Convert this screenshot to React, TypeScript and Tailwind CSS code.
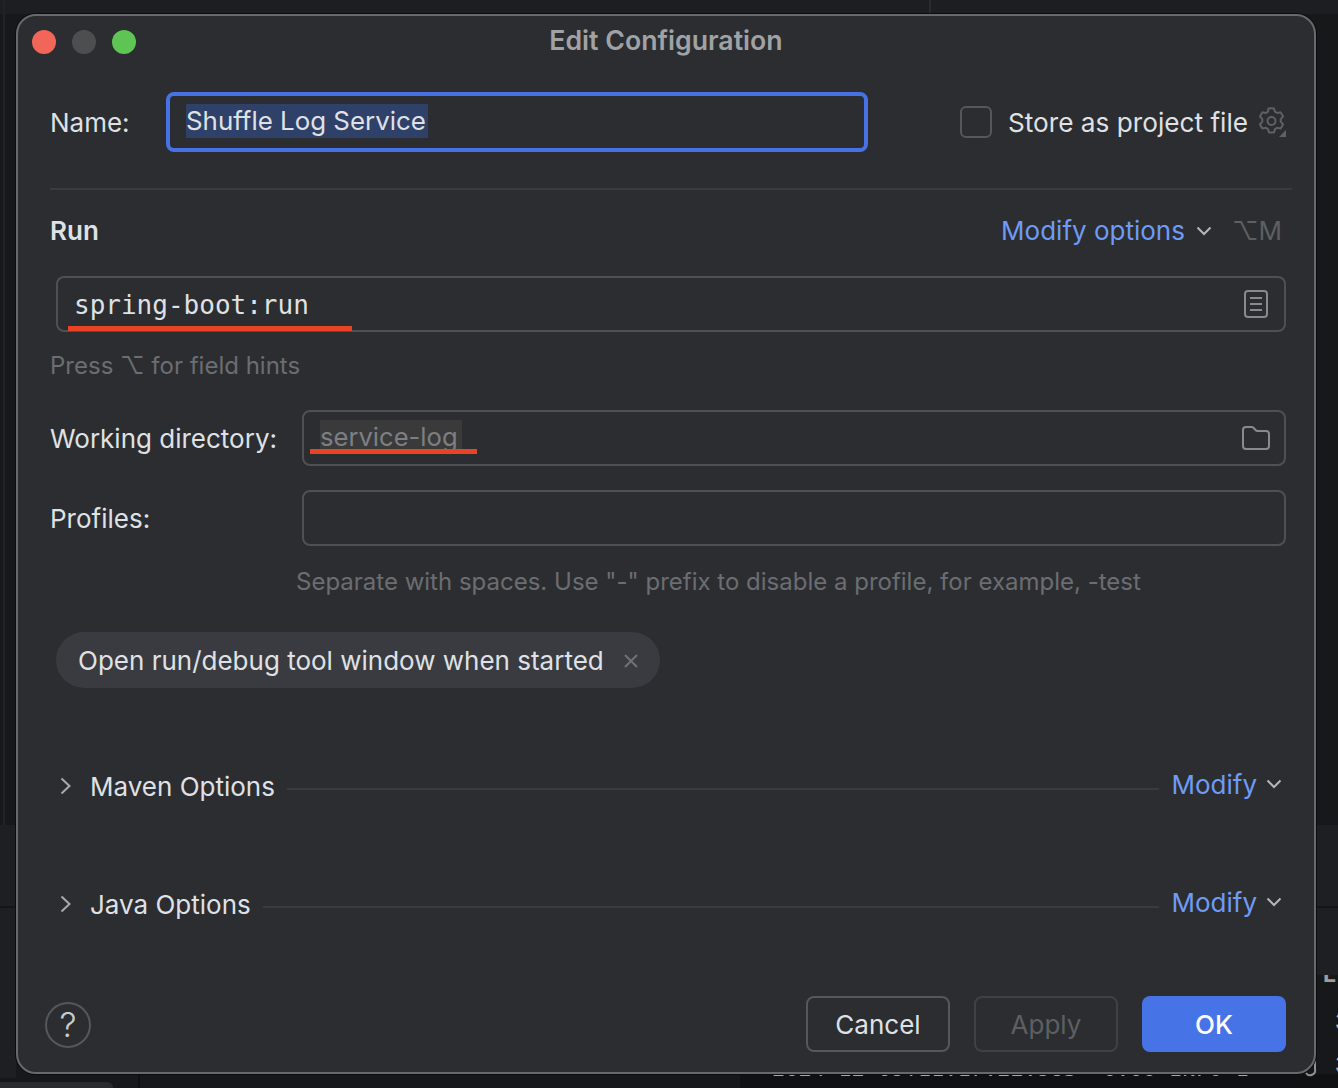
import React from "react";

const Chevron = ({ className }: { className?: string }) => (
  <svg width="16" height="10" viewBox="0 0 16 10" fill="none" className={className}>
    <path d="M1.5 1.5 L8 8 L14.5 1.5" stroke="#b4b6ba" strokeWidth="2" />
  </svg>
);

const ChevronRight = () => (
  <svg width="12" height="18" viewBox="0 0 12 18" fill="none">
    <path d="M1.5 1.5 L9.500 9 L1.500 16.500" stroke="#a8aaae" strokeWidth="2" />
  </svg>
);

const Gear = () => (
  <svg width="29" height="30" viewBox="0 0 29 30" fill="none">
    <path
      d="M13 1.5h0.5a11 11 0 0 1 5 0l1 3.2 2.2 1.3 3.3-.7a12 12 0 0 1 2.500 4.300l-2.300 2.500v2.600l2.300 2.500a12 12 0 0 1-2.500 4.300l-3.300-.7-2.200 1.300-1 3.200a11 11 0 0 1-5 0l-1-3.200-2.200-1.300-3.300.7a12 12 0 0 1-2.500-4.300l2.300-2.500v-2.600l-2.300-2.500a12 12 0 0 1 2.500-4.300l3.300.7 2.200-1.300z"
      stroke="#5f6165"
      strokeWidth="2"
      transform="translate(-1.500 0)"
    />
    <circle cx="14.500" cy="14" r="4" stroke="#5f6165" strokeWidth="2" />
    <path d="M29 23v7h-7z" fill="#5f6165" />
  </svg>
);

const DocIcon = () => (
  <svg width="24" height="28" viewBox="0 0 24 28" fill="none">
    <rect x="1" y="1" width="22" height="26" rx="3" stroke="#868a91" strokeWidth="2" />
    <path d="M6 8h12M6 14h12M6 20h12" stroke="#868a91" strokeWidth="2" />
  </svg>
);

const FolderIcon = () => (
  <svg width="28" height="24" viewBox="0 0 28 24" fill="none">
    <path
      d="M1 4a3 3 0 0 1 3-3h5.500a3 3 0 0 1 2 .8l2 2.200a3 3 0 0 0 2 1h8.500a3 3 0 0 1 3 3v12a3 3 0 0 1-3 3H4a3 3 0 0 1-3-3z"
      stroke="#868a91"
      strokeWidth="2"
    />
  </svg>
);

const CloseIcon = () => (
  <svg width="14" height="14" viewBox="0 0 14 14" fill="none">
    <path d="M1 1l12 12M13 1L1 13" stroke="#6f7175" strokeWidth="2" />
  </svg>
);

const Section = ({ title }: { title: string }) => (
  <div className="flex h-[36px] items-center pl-[10px] pr-[4px]">
    <span className="flex w-[30px] shrink-0 items-center">
      <ChevronRight />
    </span>
    <span className="mt-[2px] text-[#dfe1e5]">{title}</span>
    <span className="ml-[12px] mr-[12px] mt-[6px] h-[2px] flex-1 bg-[#393b3f]" />
    <span className="mb-[2px] text-[#6f9bf5]">Modify</span>
    <span className="mb-[4px] ml-[9px] flex">
      <Chevron />
    </span>
  </div>
);

export default function App() {
  return (
    <div
      className="relative h-[1088px] w-[1338px] overflow-hidden bg-[#17181a] pl-[16px] pt-[14px] text-[26px] leading-[34px]"
      style={{ fontFamily: "Inter, 'Liberation Sans', sans-serif" }}
    >
      {/* backdrop: the IDE behind the dialog */}
      <div className="absolute left-0 top-0 h-[14px] w-full bg-[#1d1e21]" />
      <div className="absolute left-[929px] top-0 h-[14px] w-[2px] bg-[#2a2b2e]" />
      <div className="absolute left-[3px] top-0 h-[825px] w-[2px] bg-[#222326]" />
      <div className="absolute left-[1322px] top-[964px] font-mono text-[24px] font-semibold leading-[24px] text-[#9b9da1]">
        Lt
      </div>
      <div className="absolute left-[1335px] top-[1002px] font-mono text-[26px] font-semibold leading-[43px] text-[#b4b6ba]">
        3
        <br />3
      </div>
      <div className="absolute bottom-0 left-[1316px] top-[825px] h-[150px] w-[22px] bg-[#1e1f22]" />
      <div className="absolute left-[1316px] top-[906px] h-[2px] w-[22px] bg-[#141517]" />
      <div className="absolute left-0 top-[825px] h-[253px] w-[16px] bg-[#1e1f22]" />
      <div className="absolute left-0 top-[906px] h-[2px] w-[16px] bg-[#141517]" />
      <div className="absolute bottom-0 left-[740px] h-[14px] w-[598px] bg-[#101113]" />
      <div className="absolute bottom-0 left-0 h-[6px] w-[113px] rounded-tr-[8px] bg-[#2a2b2e]" />
      <div className="absolute bottom-0 left-[138px] h-[14px] w-[2px] bg-[#0e0f10]" />
      <div
        className="absolute left-[772px] top-[1056px] text-[22px] leading-[26px] text-[#a8aaae]"
        style={{ fontFamily: "'DejaVu Sans Mono', monospace" }}
      >
        2024-12-09T11:17:22.983 +0:00 INFO 1
      </div>
      <svg className="absolute left-[1300px] top-[1056px]" width="20" height="24" viewBox="0 0 20 24" fill="none">
        <path d="M15 2v11a5 5 0 0 1-9 4" stroke="#8e9094" strokeWidth="2" />
      </svg>

      {/* dialog */}
      <div className="relative flex h-[1060px] w-[1300px] flex-col rounded-[20px] border-2 border-[#67696c] bg-[#2b2d30] pl-[32px] pr-[28px] shadow-[0_0_0_1px_#0c0c0e]">
        {/* title bar */}
        <div className="relative -ml-[18px] flex h-[52px] items-center">
          <div className="flex gap-[16px]">
            <span className="h-[24px] w-[24px] rounded-full bg-[#f2665a]" />
            <span className="h-[24px] w-[24px] rounded-full bg-[#4d4e50]" />
            <span className="h-[24px] w-[24px] rounded-full bg-[#5ec453]" />
          </div>
          <div className="absolute left-[14px] right-0 top-[7px] text-center text-[26.7px] font-semibold text-[#a0a2a6]">
            Edit Configuration
          </div>
        </div>

        {/* name row */}
        <div className="mt-[24px] flex h-[60px] items-center">
          <span className="w-[116px] shrink-0 pt-[2px] text-[#dfe1e5]">Name:</span>
          <div className="flex h-[60px] w-[702px] shrink-0 items-center rounded-[8px] border-[4px] border-[#4672e6] pl-[16px]">
            <span className="-mt-[2px] bg-[#2f4069] pr-[2px] text-[25.9px] text-[#dfe1e5]">Shuffle Log Service</span>
          </div>
          <div className="ml-[92px] h-[32px] w-[32px] shrink-0 rounded-[6px] border-2 border-[#55575b]" />
          <span className="ml-[16px] whitespace-nowrap pt-[2px] text-[26.2px] text-[#dfe1e5]">Store as project file</span>
          <span className="ml-[9px] flex shrink-0">
            <Gear />
          </span>
        </div>

        <div className="mr-[-6px] mt-[36px] h-[2px] bg-[#3a3b3f]" />

        {/* run header */}
        <div className="mt-[23px] flex h-[36px] items-center">
          <span className="font-semibold text-[#dfe1e5]">Run</span>
          <span className="ml-auto text-[#6f9bf5]">Modify options</span>
          <span className="ml-[11px] flex">
            <Chevron />
          </span>
          <span className="ml-[20px] mr-[4px] text-[#5d5f63]">⌥M</span>
        </div>

        {/* command */}
        <div className="relative ml-[6px] mt-[27px] flex h-[56px] items-center justify-between rounded-[8px] border-2 border-[#4e5054] pl-[16px] pr-[16px]">
          <span
            className="pt-[1px] font-medium text-[#dfe1e5]"
            style={{ fontFamily: "'DejaVu Sans Mono', monospace" }}
          >
            spring-boot:run
          </span>
          <DocIcon />
          <span className="absolute bottom-[-1px] left-[10px] h-[5px] w-[284px] bg-[#e84325]" />
        </div>

        <div className="mt-[17px] h-[34px] text-[24px] text-[#6b6d72]">Press ⌥ for field hints</div>

        {/* working dir */}
        <div className="mt-[27px] flex h-[56px] items-center">
          <span className="w-[252px] shrink-0 pt-[2px] text-[#dfe1e5]">Working directory:</span>
          <div className="relative flex h-[56px] flex-1 items-center justify-between rounded-[8px] border-2 border-[#4e5054] pl-[16px] pr-[14px]">
            <span className="-mt-[2px] bg-[#3a3a3b] pr-[4px] text-[25.6px] text-[#7d7f83]">service-log</span>
            <FolderIcon />
            <span className="absolute bottom-[10px] left-[6px] h-[5px] w-[167px] bg-[#e84325]" />
          </div>
        </div>

        {/* profiles */}
        <div className="mt-[24px] flex h-[56px] items-center">
          <span className="w-[252px] shrink-0 pt-[2px] text-[#dfe1e5]">Profiles:</span>
          <div className="h-[56px] flex-1 rounded-[8px] border-2 border-[#4e5054]" />
        </div>

        <div className="mt-[19px] h-[34px] pl-[246px] text-[24px] text-[#6b6d72]">
          Separate with spaces. Use "-" prefix to disable a profile, for example, -test
        </div>

        {/* chip */}
        <div className="ml-[6px] mt-[33px] flex h-[56px] w-[604px] items-center rounded-full bg-[#393b40] pl-[22px]">
          <span className="pt-[1px] text-[#dfe1e5]">Open run/debug tool window when started</span>
          <span className="ml-[20px] mt-[2px] flex">
            <CloseIcon />
          </span>
        </div>

        {/* sections */}
        <div className="mt-[80px]">
          <Section title="Maven Options" />
        </div>
        <div className="mt-[82px]">
          <Section title="Java Options" />
        </div>

        {/* footer */}
        <div className="mb-[20px] mt-auto flex items-center">
          <div className="-ml-[5px] mt-[2px] flex h-[46px] w-[46px] items-center justify-center rounded-full border-2 border-[#55575b] text-[34px] font-light text-[#c9cbcf]">
            ?
          </div>
          <button className="ml-auto h-[56px] w-[144px] rounded-[8px] border-2 border-[#55575b] pt-[2px] text-[#dfe1e5]">
            Cancel
          </button>
          <button className="ml-[24px] h-[56px] w-[144px] rounded-[8px] border-2 border-[#3f4145] pt-[2px] text-[#5d5f63]">
            Apply
          </button>
          <button className="ml-[24px] h-[56px] w-[144px] rounded-[8px] bg-[#4673e6] pt-[2px] font-medium text-white">
            OK
          </button>
        </div>
      </div>
    </div>
  );
}
